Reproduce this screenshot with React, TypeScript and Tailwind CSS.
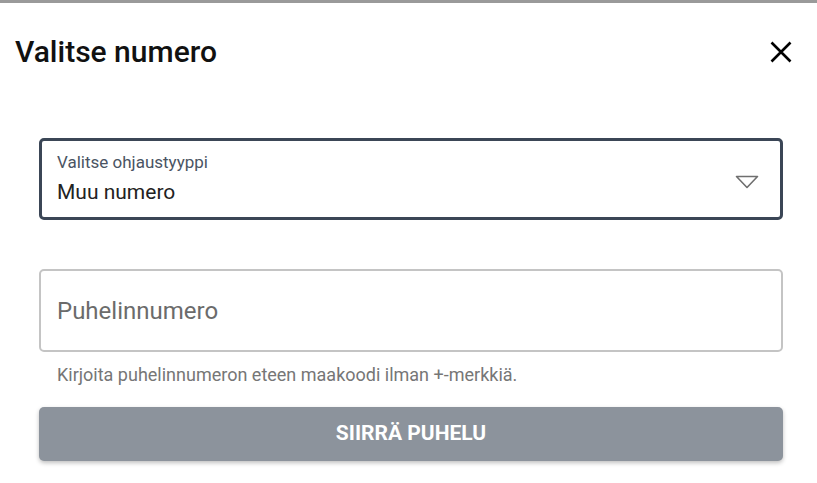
export default function App() {
  return (
    <div className="min-h-screen bg-white font-['Roboto',sans-serif]">
      <div className="h-[3px] bg-[#9a9a9a]" />
      <div className="flex items-start justify-between pl-[15px] pr-[25px] pt-[33px]">
        <h1 className="text-[30px] leading-[32px] font-medium text-[#111]">
          Valitse numero
        </h1>
        <button className="mt-[5px] text-black" aria-label="Sulje">
          <svg width="22" height="22" viewBox="0 0 22 22">
            <path
              d="M1.5 1.5 L20.5 20.5 M20.5 1.5 L1.5 20.5"
              stroke="currentColor"
              strokeWidth="2.6"
              fill="none"
            />
          </svg>
        </button>
      </div>

      <div className="ml-[39px] w-[744px] pt-[70px]">
        <div className="flex items-center justify-between rounded-[5px] border-[3px] border-[#3b4656] pl-[15px] pr-[21px] pt-[11px] pb-[13px]">
          <div className="flex flex-col gap-[8px]">
            <span className="text-[17px] leading-[20px] text-[#4a5463]">
              Valitse ohjaustyyppi
            </span>
            <span className="text-[21px] leading-[24px] text-[#222]">
              Muu numero
            </span>
          </div>
          <svg width="24" height="14" viewBox="0 0 24 14" className="mt-[8px]">
            <path
              d="M1.5 1.5 L22.5 1.5 L12 12.5 Z"
              fill="none"
              stroke="#6f6f6f"
              strokeWidth="1.6"
              strokeLinejoin="round"
            />
          </svg>
        </div>

        <div className="mt-[49px] flex h-[83px] items-center rounded-[5px] border-2 border-[#c4c4c4] px-[16px]">
          <span className="text-[24px] text-[#6b6b6b]">Puhelinnumero</span>
        </div>

        <p className="mt-[12px] pl-[18px] text-[18px] leading-[22px] text-[#767676]">
          Kirjoita puhelinnumeron eteen maakoodi ilman +-merkkiä.
        </p>

        <button className="mt-[21px] flex h-[54px] w-full items-center justify-center rounded-[5px] bg-[#8c939c] text-[21px] font-bold text-white shadow-[0_2px_4px_rgba(0,0,0,0.25)]">
          SIIRRÄ PUHELU
        </button>
      </div>
    </div>
  );
}
